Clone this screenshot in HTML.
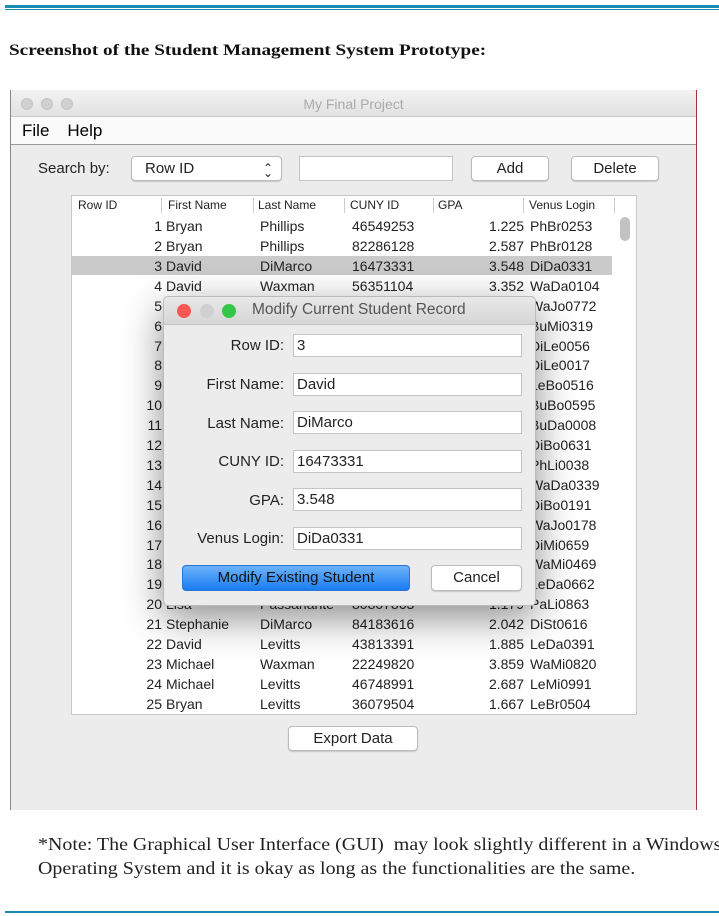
<!DOCTYPE html>
<html><head><meta charset="utf-8"><style>
*{margin:0;padding:0;box-sizing:border-box}
body{width:719px;height:916px;background:#fff;position:relative;overflow:hidden;font-family:"Liberation Sans",sans-serif}
.a{position:absolute}
.serif{font-family:"Liberation Serif",serif}
.win{left:10px;top:90px;width:687px;height:720px;background:#ececec;border-left:1px solid #888;border-right:1px solid #a33}
.tb{left:0;top:0;width:100%;height:27px;background:linear-gradient(#f2f2f2,#e2e2e2);border-bottom:1px solid #c8c8c8;border-radius:5px 5px 0 0;text-align:center;color:#aaa;font-size:14px;line-height:28px}
.dot{width:12px;height:12px;border-radius:50%;background:#d0d0d0;border:1px solid #c3c3c3;top:8px}
.mb{left:0;top:27px;width:100%;height:28px;background:#fafafa;border-bottom:1px solid #999;font-size:17px;line-height:28px}
.btn{background:#fff;border:1px solid #bbb;border-radius:4px;box-shadow:0 1px 1px rgba(0,0,0,.15);text-align:center;font-size:15px;color:#222}
.tbl{left:71px;top:195px;width:566px;height:520px;background:#fff;border:1px solid #c9c9c9;overflow:hidden;font-size:14px;color:#222}
.hd{top:0;height:19px;font-size:12px;line-height:18px;color:#222}
.sep{top:2px;width:1px;height:15px;background:#ccc}
.r{left:0;width:548px;height:20px;line-height:20px}
.r span{position:absolute;white-space:nowrap}
.n{right:458px;text-align:right}
.f{left:94px}.l{left:188px}.c{left:280px}.g{right:96px}.v{left:458px}
.dlg{left:163px;top:296px;width:373px;height:310px;background:#ececec;border:1px solid #bbb;border-radius:5px;box-shadow:0 12px 40px rgba(0,0,0,.45);font-size:15px;color:#222}
.lab{right:251px;text-align:right;line-height:22px}
.fld{left:129px;width:229px;height:23px;background:#fff;border:1px solid #c4c4c4;line-height:21px;padding-left:3px}
</style></head><body>
<div class="a" style="left:5px;top:5px;width:714px;height:3px;background:#1b8bb4"></div>
<div class="a" style="left:5px;top:9px;width:714px;height:1px;background:#1b8bb4"></div>
<div class="a serif" style="left:9px;top:42px;font-size:16px;font-weight:bold;color:#111;transform:scaleX(1.2);transform-origin:left;white-space:nowrap">Screenshot of the Student Management System Prototype:</div>

<div class="a win">
 <div class="a tb">My Final Project</div>
 <div class="a dot" style="left:10px"></div><div class="a dot" style="left:30px"></div><div class="a dot" style="left:50px"></div>
 <div class="a mb"><span style="margin-left:11px">File</span><span style="margin-left:18px">Help</span></div>
</div>
<div class="a" style="left:38px;top:160px;font-size:15px;color:#222">Search by:</div>
<div class="a btn" style="left:131px;top:156px;width:151px;height:25px;text-align:left;padding-left:13px;line-height:23px">Row ID<span class="a" style="right:8px;top:0;font-size:12px">⌃</span><span class="a" style="right:8px;top:5px;font-size:12px">⌄</span></div>
<div class="a" style="left:299px;top:156px;width:154px;height:25px;background:#fff;border:1px solid #c4c4c4"></div>
<div class="a btn" style="left:471px;top:156px;width:78px;height:25px;line-height:23px">Add</div>
<div class="a btn" style="left:571px;top:156px;width:88px;height:25px;line-height:23px">Delete</div>

<div class="a tbl">
 <div class="a hd" style="left:6px">Row ID</div>
 <div class="a sep" style="left:89px"></div><div class="a hd" style="left:96px">First Name</div>
 <div class="a sep" style="left:181px"></div><div class="a hd" style="left:186px">Last Name</div>
 <div class="a sep" style="left:272px"></div><div class="a hd" style="left:278px">CUNY ID</div>
 <div class="a sep" style="left:361px"></div><div class="a hd" style="left:366px">GPA</div>
 <div class="a sep" style="left:451px"></div><div class="a hd" style="left:457px">Venus Login</div>
 <div class="a sep" style="left:542px"></div>
 <div class="a" style="left:548px;top:21px;width:10px;height:24px;background:#c2c2c2;border-radius:5px"></div>
 <div class="a" style="left:0;top:60px;width:540px;height:19px;background:#cacaca"></div>
 <div class="a" style="left:0;top:20px;width:548px">
 <div class="a r" style="top:0"><span class="n">1</span><span class="f">Bryan</span><span class="l">Phillips</span><span class="c">46549253</span><span class="g">1.225</span><span class="v">PhBr0253</span></div>
 <div class="a r" style="top:20px"><span class="n">2</span><span class="f">Bryan</span><span class="l">Phillips</span><span class="c">82286128</span><span class="g">2.587</span><span class="v">PhBr0128</span></div>
 <div class="a r" style="top:40px"><span class="n">3</span><span class="f">David</span><span class="l">DiMarco</span><span class="c">16473331</span><span class="g">3.548</span><span class="v">DiDa0331</span></div>
 <div class="a r" style="top:60px"><span class="n">4</span><span class="f">David</span><span class="l">Waxman</span><span class="c">56351104</span><span class="g">3.352</span><span class="v">WaDa0104</span></div>
 <div class="a r" style="top:80px"><span class="n">5</span><span class="f">John</span><span class="v">WaJo0772</span></div>
 <div class="a r" style="top:100px"><span class="n">6</span><span class="v">BuMi0319</span></div>
 <div class="a r" style="top:120px"><span class="n">7</span><span class="v">DiLe0056</span></div>
 <div class="a r" style="top:139px"><span class="n">8</span><span class="v">DiLe0017</span></div>
 <div class="a r" style="top:159px"><span class="n">9</span><span class="v">LeBo0516</span></div>
 <div class="a r" style="top:179px"><span class="n">10</span><span class="v">BuBo0595</span></div>
 <div class="a r" style="top:199px"><span class="n">11</span><span class="v">BuDa0008</span></div>
 <div class="a r" style="top:219px"><span class="n">12</span><span class="v">DiBo0631</span></div>
 <div class="a r" style="top:239px"><span class="n">13</span><span class="v">PhLi0038</span></div>
 <div class="a r" style="top:259px"><span class="n">14</span><span class="v">WaDa0339</span></div>
 <div class="a r" style="top:279px"><span class="n">15</span><span class="v">DiBo0191</span></div>
 <div class="a r" style="top:299px"><span class="n">16</span><span class="f">John</span><span class="v">WaJo0178</span></div>
 <div class="a r" style="top:319px"><span class="n">17</span><span class="v">DiMi0659</span></div>
 <div class="a r" style="top:338px"><span class="n">18</span><span class="v">WaMi0469</span></div>
 <div class="a r" style="top:358px"><span class="n">19</span><span class="v">LeDa0662</span></div>
 <div class="a r" style="top:378px"><span class="n">20</span><span class="f">Lisa</span><span class="l">Passanante</span><span class="c">80807863</span><span class="g">1.179</span><span class="v">PaLi0863</span></div>
 <div class="a r" style="top:398px"><span class="n">21</span><span class="f">Stephanie</span><span class="l">DiMarco</span><span class="c">84183616</span><span class="g">2.042</span><span class="v">DiSt0616</span></div>
 <div class="a r" style="top:418px"><span class="n">22</span><span class="f">David</span><span class="l">Levitts</span><span class="c">43813391</span><span class="g">1.885</span><span class="v">LeDa0391</span></div>
 <div class="a r" style="top:438px"><span class="n">23</span><span class="f">Michael</span><span class="l">Waxman</span><span class="c">22249820</span><span class="g">3.859</span><span class="v">WaMi0820</span></div>
 <div class="a r" style="top:458px"><span class="n">24</span><span class="f">Michael</span><span class="l">Levitts</span><span class="c">46748991</span><span class="g">2.687</span><span class="v">LeMi0991</span></div>
 <div class="a r" style="top:478px"><span class="n">25</span><span class="f">Bryan</span><span class="l">Levitts</span><span class="c">36079504</span><span class="g">1.667</span><span class="v">LeBr0504</span></div>
 </div>
</div>
<div class="a btn" style="left:288px;top:726px;width:130px;height:25px;line-height:24px">Export Data</div>

<div class="a dlg">
 <div class="a" style="left:0;top:0;width:100%;height:28px;background:linear-gradient(#e8e8e8,#d6d6d6);border-bottom:1px solid #c4c4c4;border-radius:5px 5px 0 0"></div>
 <div class="a" style="left:13px;top:7px;width:14px;height:14px;border-radius:50%;background:#fc5753"></div>
 <div class="a" style="left:36px;top:7px;width:14px;height:14px;border-radius:50%;background:#d0d0d0"></div>
 <div class="a" style="left:58px;top:7px;width:14px;height:14px;border-radius:50%;background:#33c748"></div>
 <div class="a" style="left:88px;top:4px;font-size:15.5px;color:#555">Modify Current Student Record</div>
 <div class="a lab" style="top:38px">Row ID:</div><div class="a fld" style="top:37px">3</div>
 <div class="a lab" style="top:77px">First Name:</div><div class="a fld" style="top:76px">David</div>
 <div class="a lab" style="top:116px">Last Name:</div><div class="a fld" style="top:114px">DiMarco</div>
 <div class="a lab" style="top:154px">CUNY ID:</div><div class="a fld" style="top:153px">16473331</div>
 <div class="a lab" style="top:193px">GPA:</div><div class="a fld" style="top:191px">3.548</div>
 <div class="a lab" style="top:231px">Venus Login:</div><div class="a fld" style="top:230px">DiDa0331</div>
 <div class="a" style="left:18px;top:268px;width:228px;height:26px;border-radius:4px;background:linear-gradient(#6cb3fa,#1a7cf2);border:1px solid #2b74d8;text-align:center;line-height:24px;color:#111">Modify Existing Student</div>
 <div class="a btn" style="left:267px;top:268px;width:91px;height:26px;line-height:24px">Cancel</div>
</div>

<div class="a serif" style="left:38px;top:832px;font-size:17.5px;color:#222;line-height:24px;white-space:nowrap;transform:scaleX(1.14);transform-origin:left">*Note: The Graphical User Interface (GUI)&nbsp; may look slightly different in a Windows<br>Operating System and it is okay as long as the functionalities are the same.</div>
<div class="a" style="left:5px;top:911px;width:714px;height:2px;background:#1b8bb4"></div>
</body></html>
